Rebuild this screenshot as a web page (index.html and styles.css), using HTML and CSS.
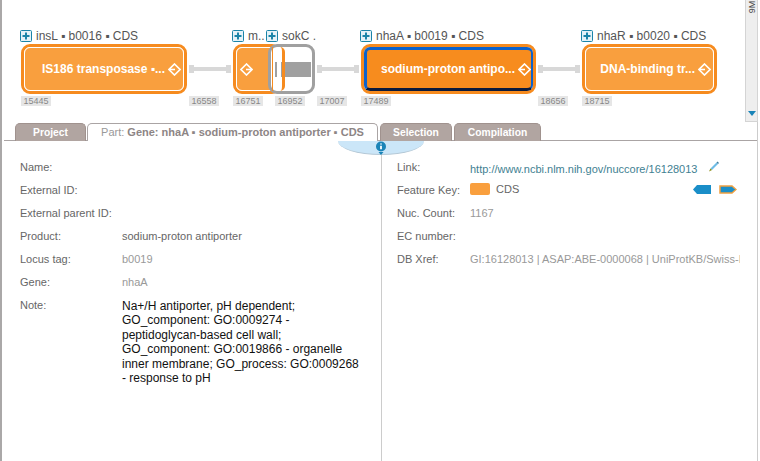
FILE: index.html
```html
<!DOCTYPE html>
<html lang="en">
<head>
  <meta charset="UTF-8" />
  <title>Part: nhaA</title>
  <link rel="stylesheet" href="styles.css">
</head>
<body>
  <svg class="defs" width="0" height="0">
    <symbol id="plus" viewBox="0 0 12 12">
      <rect x="0.5" y="0.5" width="11" height="11" rx="1" fill="#e4f2f8" stroke="#1a84a8"/>
      <path d="M6 2.5v7M2.5 6h7" stroke="#1a84a8" stroke-width="2"/>
    </symbol>
    <symbol id="dir" viewBox="0 0 13 13">
      <path d="M6.5 1L12 6.5 6.5 12 1 6.5z" fill="none" stroke="#fff" stroke-width="1.6"/>
      <path d="M1 6.5h6" stroke="#fff" stroke-width="1.6"/>
    </symbol>
  </svg>

  <div class="app">
    <div class="canvas">
      <div class="label label-insl"><svg class="plus"><use href="#plus"/></svg>insL ▪ b0016 ▪ CDS</div>
      <div class="part part-insl">
        <div class="part-inner">
          <span class="part-name">IS186 transposase ▪...</span>
          <svg class="dir"><use href="#dir"/></svg>
        </div>
      </div>
      <div class="link link-1"></div>

      <div class="label label-m"><svg class="plus"><use href="#plus"/></svg>m..</div>
      <div class="part part-m">
        <div class="part-inner">
          <svg class="dir dir-left"><use href="#dir"/></svg>
        </div>
      </div>

      <div class="label label-sokc"><svg class="plus"><use href="#plus"/></svg>sokC .</div>
      <div class="part part-sokc">
        <div class="sok-tick"></div>
        <div class="sok-bar"></div>
      </div>
      <div class="link link-2"></div>

      <div class="label label-nhaa"><svg class="plus"><use href="#plus"/></svg>nhaA ▪ b0019 ▪ CDS</div>
      <div class="part part-nhaa">
        <div class="part-inner">
          <span class="part-name">sodium-proton antipo...</span>
          <svg class="dir"><use href="#dir"/></svg>
        </div>
      </div>
      <div class="link link-3"></div>

      <div class="label label-nhar"><svg class="plus"><use href="#plus"/></svg>nhaR ▪ b0020 ▪ CDS</div>
      <div class="part part-nhar">
        <div class="part-inner">
          <span class="part-name">DNA-binding tr...</span>
          <svg class="dir"><use href="#dir"/></svg>
        </div>
      </div>

      <span class="pos pos-1">15445</span>
      <span class="pos pos-2">16558</span>
      <span class="pos pos-3">16751</span>
      <span class="pos pos-4">16952</span>
      <span class="pos pos-5">17007</span>
      <span class="pos pos-6">17489</span>
      <span class="pos pos-7">18656</span>
      <span class="pos pos-8">18715</span>

      <div class="scrollbar">
        <span class="scroll-text">9M</span>
        <span class="scroll-arrow"></span>
      </div>
    </div>

    <div class="tabs">
      <div class="tab tab-project">Project</div>
      <div class="tab tab-part">Part: <b>Gene: nhaA ▪ sodium-proton antiporter ▪ CDS</b></div>
      <div class="tab tab-selection">Selection</div>
      <div class="tab tab-compilation">Compilation</div>
    </div>

    <div class="panel">
      <div class="info-drop">
        <svg class="info-icon" viewBox="0 0 12 15" width="12" height="15">
          <circle cx="6" cy="5.5" r="5" fill="#1a84b8"/>
          <path d="M3.5 11h5L6 14z" fill="#1a84b8"/>
          <path d="M6 2.5v1M6 4.8v3.4" stroke="#fff" stroke-width="1.8"/>
        </svg>
      </div>

      <div class="col col-left">
        <div class="row"><div class="key">Name:</div><div class="val"></div></div>
        <div class="row"><div class="key">External ID:</div><div class="val"></div></div>
        <div class="row"><div class="key">External parent ID:</div><div class="val"></div></div>
        <div class="row"><div class="key">Product:</div><div class="val val-dark">sodium-proton antiporter</div></div>
        <div class="row"><div class="key">Locus tag:</div><div class="val">b0019</div></div>
        <div class="row"><div class="key">Gene:</div><div class="val">nhaA</div></div>
        <div class="row"><div class="key">Note:</div><div class="val val-note">Na+/H antiporter, pH dependent; GO_component: GO:0009274 - peptidoglycan-based cell wall; GO_component: GO:0019866 - organelle inner membrane; GO_process: GO:0009268 - response to pH</div></div>
      </div>

      <div class="col col-right">
        <div class="row"><div class="key">Link:</div>
          <div class="val val-link">http://www.ncbi.nlm.nih.gov/nuccore/16128013
            <svg class="pencil" viewBox="0 0 12 12" width="12" height="12">
              <path d="M2.5 7.5L8.5 1.5 10 3 4 9z" fill="#6fbce6"/>
              <path d="M8.5 1.5l1-1L11 2l-1 1z" fill="#3f7f9f"/>
              <path d="M2.5 7.5L1 10.5 4 9z" fill="#8a8a10"/>
            </svg>
          </div>
        </div>
        <div class="row"><div class="key">Feature Key:</div>
          <div class="val val-key">
            <span class="swatch"></span><span class="key-name">CDS</span>
            <span class="strands">
              <svg viewBox="0 0 18 9" width="18" height="9"><path d="M0 4.5L4 0h14v9H4z" fill="#1a8ec8"/></svg>
              <svg viewBox="0 0 18 9" width="18" height="9"><path d="M1 1h12l4 3.5-4 3.5H1z" fill="#1a8ec8" stroke="#f0a040" stroke-width="1.5"/></svg>
            </span>
          </div>
        </div>
        <div class="row"><div class="key">Nuc. Count:</div><div class="val">1167</div></div>
        <div class="row"><div class="key">EC number:</div><div class="val"></div></div>
        <div class="row"><div class="key">DB Xref:</div><div class="val val-clip">GI:16128013 | ASAP:ABE-0000068 | UniProtKB/Swiss-Prot:P13738</div></div>
      </div>
    </div>
  </div>
</body>
</html>
```

FILE: styles.css
```css
* {
  box-sizing: border-box;
  margin: 0;
  padding: 0;
}

body {
  font-family: "Liberation Sans", Arial, sans-serif;
  font-size: 11px;
  background: #fff;
  color: #666;
  overflow: hidden;
}

.defs {
  position: absolute;
}

.app {
  width: 758px;
  height: 461px;
  border-left: 2px solid #aaa8a8;
  border-right: 1px solid #ccc;
  display: flex;
  flex-direction: column;
}

/* diagram canvas: parts sit at their own place */
.canvas {
  position: relative;
  height: 123px;
  margin-left: -2px;
  flex: none;
}

.label {
  position: absolute;
  top: 29px;
  display: flex;
  align-items: center;
  height: 13px;
  font-size: 12px;
  color: #555;
  white-space: nowrap;
}

.plus {
  width: 12px;
  height: 12px;
  margin-right: 4px;
  flex: none;
}

.label-insl { left: 20px; }
.label-m { left: 232px; }
.label-sokc { left: 266px; }
.label-nhaa { left: 360px; }
.label-nhar { left: 581px; }

.part {
  position: absolute;
  top: 44px;
  height: 50px;
  border: 3px solid #f68b1f;
  border-radius: 9px;
}

.part-inner {
  height: 100%;
  border: 1px solid #fff;
  border-radius: 6px;
  background: #f99f3e;
  display: flex;
  align-items: center;
  justify-content: flex-end;
  padding-right: 2px;
}

.part-name {
  color: #fff;
  font-weight: bold;
  font-size: 12px;
  white-space: nowrap;
  margin-right: 3px;
}

.dir {
  width: 13px;
  height: 13px;
  flex: none;
}

.dir-left {
  margin-right: auto;
  margin-left: 3px;
  transform: scaleX(-1);
}

.part-insl { left: 21px; width: 166px; }
.part-m { left: 233px; width: 48px; }
.part-nhaa { left: 361px; width: 175px; }
.part-nhar { left: 582px; width: 135px; }

.part-nhaa .part-inner {
  background: #f78c1e;
  border: 3px solid #0d62cc;
  border-bottom-color: #0a1a3c;
  border-right-width: 2px;
  padding-right: 0;
}

.part-sokc {
  left: 268px;
  width: 47px;
  border-color: #a0a0a0;
  background: #fff;
  display: flex;
  align-items: center;
  padding-left: 4px;
}

/* end of the m.. part showing through the selection frame */
.part-sokc::before {
  content: "";
  position: absolute;
  left: 1px;
  top: 0;
  bottom: 0;
  width: 9px;
  border-right: 3px solid #f68b1f;
  border-left: 1px solid #f68b1f;
  border-radius: 0 5px 5px 0;
}

.sok-tick {
  width: 2px;
  height: 15px;
  background: #a0a0a0;
  margin-right: 4px;
  flex: none;
}

.sok-bar {
  width: 30px;
  height: 15px;
  background: #a0a0a0;
}

.link {
  position: absolute;
  top: 65px;
  width: 42px;
  height: 8px;
  border-left: 5px solid #d8d8d8;
  border-right: 5px solid #d8d8d8;
  background: linear-gradient(#d8d8d8, #d8d8d8) center / 100% 4px no-repeat;
}

.link-1 { left: 189px; }
.link-2 { left: 317px; }
.link-3 { left: 538px; }

.pos {
  position: absolute;
  top: 96px;
  width: 30px;
  height: 10px;
  background: #e6e6e6;
  color: #888;
  font-size: 9px;
  line-height: 10px;
  text-align: center;
}

.pos-1 { left: 21px; }
.pos-2 { left: 189px; }
.pos-3 { left: 233px; }
.pos-4 { left: 275px; }
.pos-5 { left: 317px; }
.pos-6 { left: 361px; }
.pos-7 { left: 538px; }
.pos-8 { left: 582px; }

.scrollbar {
  position: absolute;
  left: 745px;
  top: 0;
  width: 13px;
  height: 122px;
  background: #eee;
  border: 1px solid #d4d4d4;
  border-top: none;
  overflow: hidden;
}

.scroll-text {
  position: absolute;
  top: 2px;
  left: 0;
  font-size: 9px;
  color: #444;
  transform: rotate(-90deg);
}

.scroll-arrow {
  position: absolute;
  left: 2px;
  bottom: 5px;
  border-left: 4px solid transparent;
  border-right: 4px solid transparent;
  border-top: 5px solid #1a84b8;
}

.tabs {
  height: 18px;
  flex: none;
  display: flex;
  padding-left: 11px;
  gap: 2px;
  align-items: flex-start;
  border-bottom: 1px solid #aaa4a4;
  margin-left: 2px;
}

.tab {
  height: 18px;
  border: 1px solid #a0928e;
  border-bottom: none;
  border-radius: 5px 5px 0 0;
  background: #b1a5a1;
  color: #fff;
  font-weight: bold;
  font-size: 10.3px;
  line-height: 17px;
  text-align: center;
}

.tab-project { width: 71px; }
.tab-selection { width: 72px; }
.tab-compilation { width: 87px; }

.tab-part {
  width: 291px;
  margin-left: -1px;
  background: #fff;
  color: #999;
  font-size: 11px;
  font-weight: normal;
  border-color: #aaa4a4;
  position: relative;
  z-index: 1;
}

.tab-part b {
  color: #8d8585;
}

.panel {
  position: relative;
  flex: 1;
  display: grid;
  grid-template-columns: 379px 1fr;
  padding-top: 20px;
}

.panel::before {
  content: "";
  position: absolute;
  left: 379px;
  top: 14px;
  bottom: 0;
  width: 1px;
  background: #ccc;
}

.info-drop {
  position: absolute;
  left: 336px;
  top: 0;
  width: 86px;
  height: 14px;
  background: #cbe6f8;
  border-bottom: 1px solid #b4c8d6;
  border-radius: 0 0 43px 43px / 0 0 14px 14px;
  display: flex;
  justify-content: center;
}

.col {
  padding-left: 18px;
}

.col-right {
  padding-left: 16px;
  min-width: 0;
  overflow: hidden;
}

.row {
  display: grid;
  grid-template-columns: 102px 1fr;
  min-height: 23px;
  line-height: 13px;
  color: #666;
}

.col-right .row {
  grid-template-columns: 73px 1fr;
}

.key {
  white-space: nowrap;
}

.val {
  color: #999;
  min-width: 0;
}

.val-dark {
  color: #666;
}

.val-note {
  color: #111;
  font-size: 12px;
  line-height: 14.4px;
  width: 240px;
}

.val-link {
  color: #3f7f92;
  white-space: nowrap;
}

.pencil {
  margin-left: 7px;
  vertical-align: 0;
}

.val-key {
  display: flex;
  align-items: flex-start;
  color: #666;
  margin-top: -1px;
}

.swatch {
  width: 20px;
  height: 12px;
  background: #f99f3e;
  border-radius: 2px;
}

.key-name {
  margin-left: 6px;
}

.strands {
  margin-left: auto;
  margin-right: 20px;
  display: flex;
  gap: 8px;
  margin-top: 2px;
}

.val-clip {
  white-space: nowrap;
  overflow: hidden;
  width: 270px;
}
```
